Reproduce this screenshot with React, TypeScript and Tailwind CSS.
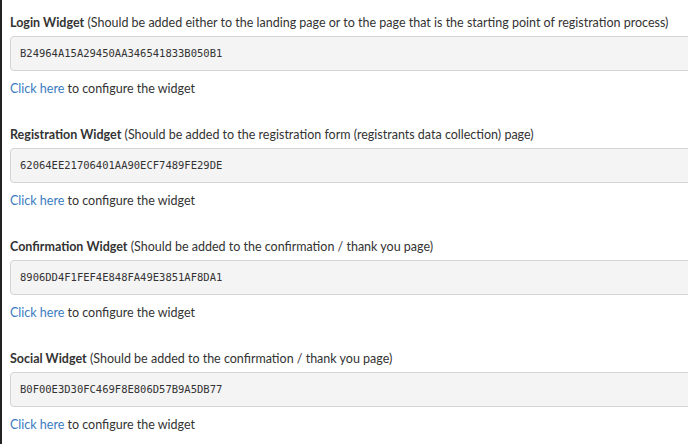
const widgets = [
  {
    name: "Login Widget",
    note: "(Should be added either to the landing page or to the page that is the starting point of registration process)",
    key: "B24964A15A29450AA346541833B050B1",
  },
  {
    name: "Registration Widget",
    note: "(Should be added to the registration form (registrants data collection) page)",
    key: "62064EE21706401AA90ECF7489FE29DE",
  },
  {
    name: "Confirmation Widget",
    note: "(Should be added to the confirmation / thank you page)",
    key: "8906DD4F1FEF4E848FA49E3851AF8DA1",
  },
  {
    name: "Social Widget",
    note: "(Should be added to the confirmation / thank you page)",
    key: "B0F00E3D30FC469F8E806D57B9A5DB77",
  },
];

export default function App() {
  return (
    <div className="h-[444px] w-[688px] overflow-hidden border-l-2 border-[#222] bg-white pl-2 pt-3 text-[12.5px] text-[#333] [font-family:Lato,'Open_Sans',sans-serif]">
      {widgets.map((w) => (
        <section key={w.name} className="mb-[25px] pt-px">
          <div className="h-5 leading-5 whitespace-nowrap">
            <span className="font-bold">{w.name}</span> {w.note}
          </div>
          <div className="mt-[3px] flex h-[35px] w-[700px] items-center rounded-l border border-[#d4d4d4] bg-[#f4f4f4] pl-[9px] font-['DejaVu_Sans_Mono',monospace] text-[10.5px] text-[#333]">
            {w.key}
          </div>
          <div className="mt-[8px] h-5 leading-5">
            <a href="#" className="text-[#3a7bbf]">
              Click here
            </a>{" "}
            to configure the widget
          </div>
        </section>
      ))}
    </div>
  );
}
